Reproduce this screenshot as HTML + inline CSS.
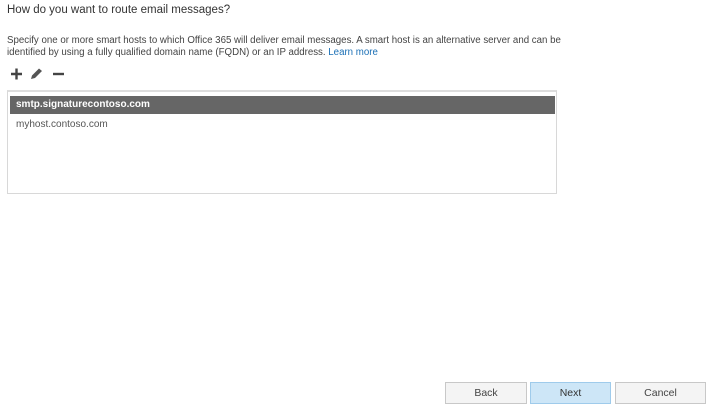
<!DOCTYPE html>
<html><head><style>
body{margin:0;width:716px;height:408px;background:#fff;font-family:"Liberation Sans",sans-serif;color:#333;position:relative;overflow:hidden}
.a{position:absolute;white-space:nowrap}
.t{left:7px;top:4px;font-size:11.5px;color:#333}
.p{left:7px;font-size:9.7px;color:#444}
.box{position:absolute;left:7px;top:90px;width:548px;height:101px;border:1px solid #d8d8d8;border-top:2px solid #ddd}
.sel{position:absolute;left:2px;top:4px;width:545px;height:18px;background:#666;color:#fff;font-weight:bold;font-size:10px;line-height:18px;padding-left:6px;box-sizing:border-box}
.row{position:absolute;left:8px;top:27px;font-size:10px;color:#555}
.btn{position:absolute;top:382px;height:20px;border:1px solid #c8c8c8;background:#f4f4f4;font-size:10.5px;color:#444;text-align:center;line-height:20px;box-sizing:content-box}
</style></head><body>
<div class="a t">How do you want to route email messages?</div>
<div class="a p" style="top:35px">Specify one or more smart hosts to which Office 365 will deliver email messages. A smart host is an alternative server and can be</div>
<div class="a p" style="top:47px">identified by using a fully qualified domain name (FQDN) or an IP address. <span style="color:#1a6fb5">Learn more</span></div>
<svg class="a" style="left:9px;top:67px" width="60" height="14">
<path d="M2 7H13M7.5 1.5V12.5" stroke="#444" stroke-width="2.4"/>
<path d="M22 12L23 8.5L30 1.5L33 4L26 11Z" fill="#555"/>
<path d="M44 7H55" stroke="#444" stroke-width="2.4"/>
</svg>
<div class="box"><div class="sel">smtp.signaturecontoso.com</div><div class="row">myhost.contoso.com</div></div>
<div class="btn" style="left:445px;width:80px">Back</div>
<div class="btn" style="left:530px;width:79px;background:#cde6f7;border-color:#9fcbeb;color:#333">Next</div>
<div class="btn" style="left:615px;width:89px">Cancel</div>
</body></html>
